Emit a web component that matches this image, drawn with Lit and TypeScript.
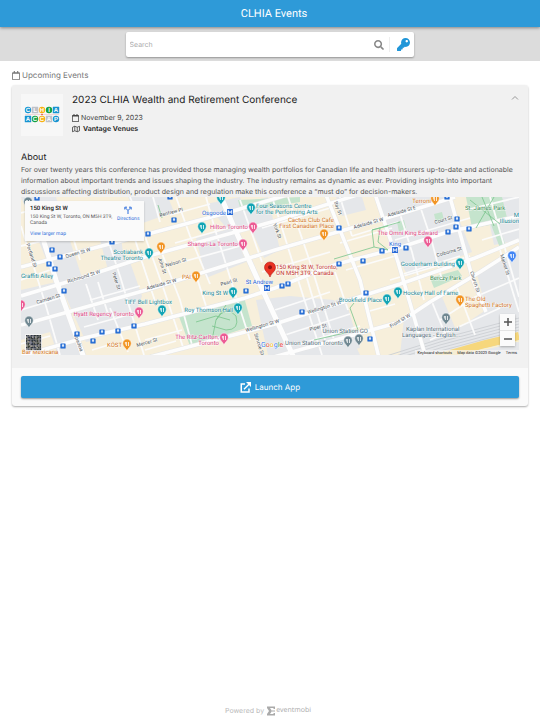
import { LitElement, html, svg, css } from "lit";
import { customElement, state } from "lit/decorators.js";

const ICONS = {
  search:
    "M505 442.700L405.300 343c-4.500-4.500-10.600-7-17-7H372c27.600-35.300 44-79.700 44-128C416 93.100 322.900 0 208 0S0 93.100 0 208s93.100 208 208 208c48.300 0 92.700-16.400 128-44v16.300c0 6.400 2.500 12.500 7 17l99.700 99.700c9.400 9.400 24.600 9.400 33.900 0l28.300-28.300c9.400-9.400 9.400-24.600.1-34zM208 336c-70.700 0-128-57.200-128-128 0-70.700 57.200-128 128-128 70.700 0 128 57.200 128 128 0 70.700-57.200 128-128 128z",
  key: "M512 176.001C512 273.203 433.202 352 336 352c-11.220 0-22.190-1.062-32.827-3.069l-24.012 27.014A23.999 23.999 0 0 1 261.223 384H224v40c0 13.255-10.745 24-24 24h-40v40c0 13.255-10.745 24-24 24H24c-13.255 0-24-10.745-24-24v-78.059c0-6.365 2.529-12.470 7.029-16.971l161.802-161.802C163.108 213.814 160 195.271 160 176 160 78.798 238.797.001 335.999 0 433.488-.001 512 78.511 512 176.001zM336 128c0 26.510 21.490 48 48 48s48-21.490 48-48-21.490-48-48-48-48 21.490-48 48z",
  calendar:
    "M400 64h-48V12c0-6.600-5.400-12-12-12h-40c-6.600 0-12 5.400-12 12v52H160V12c0-6.600-5.400-12-12-12h-40c-6.600 0-12 5.400-12 12v52H48C21.500 64 0 85.500 0 112v352c0 26.500 21.500 48 48 48h352c26.500 0 48-21.500 48-48V112c0-26.500-21.500-48-48-48zm-6 400H54c-3.300 0-6-2.700-6-6V160h352v298c0 3.300-2.700 6-6 6z",
};

const TEAL = "#12a4b4";
const PINK = "#ec5b94";
const ORANGE = "#f29423";
const SLATE = "#6f8791";
const BLUE = "#4285f4";

/* Road network, drawn widest first */
const AVENUES = [
  "M21 180L44 242L56 280L84 358",
  "M214 180L233 225L258 280L294 358",
  "M320 180L360 280L379 358",
  "M21 296L87 276L145 257L275 221L360 194",
  "M21 267L148 234L230 212L290 194",
  "M21 356L84 338L145 324L245 298L275 288L337 264L395 249L448 232L519 216",
  "M150 357L188 347L275 324L340 303L400 284L475 258L519 240",
  "M270 358L310 347L400 322L430 302L480 272L519 247",
  "M21 325L68 312L150 289L275 250L400 214L455 197",
  "M375 194L398 262L426 358",
  "M448 190L473 280L486 312",
];

const STREETS = [
  "M21 226L46 306L60 355", "M66 240L84 240L130 228", "M108 240L120 276L144 355", "M134 236L142 262L156 304",
  "M130 197L140 222L164 290L184 350", "M153 197L160 222", "M176 197L190 236L210 284", "M158 243L180 300L192 345",
  "M206 197L214 226L234 290L250 340", "M165 230L240 210", "M175 243L228 228", "M182 262L240 246", "M170 215L210 204",
  "M272 197L282 228L300 286L322 355", "M240 200L262 262", "M288 197L310 262L334 340", "M262 228L330 208",
  "M262 272L330 252", "M340 197L352 236", "M346 270L395 256", "M352 236L398 222", "M340 243L392 228",
  "M395 240L470 218", "M390 280L470 256", "M400 214L412 252L424 300", "M420 206L432 242L442 280", "M400 275L460 256",
  "M490 197L519 297", "M466 210L519 197", "M482 240L519 229", "M500 250L519 312", "M440 320L475 297L519 278",
  "M430 340L500 308", "M432 302L446 336", "M456 285L475 335", "M92 350L112 344", "M21 344L50 336", "M90 300L140 286",
  "M86 284L98 320", "M98 282L108 314", "M21 280L50 270", "M21 310L60 298", "M84 327L135 313", "M110 308L128 352",
  "M145 340L182 330", "M145 350L176 341", "M196 275L206 306", "M285 335L350 314", "M300 344L360 326", "M275 310L330 292",
  "M335 272L348 310", "M306 275L325 340", "M366 312L395 304", "M21 213L40 208", "M21 246L46 240", "M67 218L80 260",
];

/* District fills laid under the roads */
const GREY_BLOCKS = [
  "21,290 56,282 84,355 21,355", "60,284 130,262 142,296 128,334 86,342", "128,197 168,197 174,212 140,224",
  "196,238 232,228 246,262 206,278", "206,204 240,197 250,226 230,232", "240,204 268,197 280,250 264,258",
  "256,300 290,296 334,300 360,355 268,355", "336,300 345,298 360,348 326,355", "376,197 450,197 472,252 408,276 394,250",
  "404,318 519,250 519,355 400,355", "484,197 519,197 519,240 494,245", "21,197 56,197 84,284 56,284", "100,240 134,235 140,260 108,270",
  "336,197 362,197 366,210 342,216",
];
const CREAM_BLOCKS = [
  "21,340 50,332 58,355 21,355", "21,268 50,262 54,276 21,288", "92,338 140,324 148,350 96,355", "440,292 476,270 486,310 456,330",
  "400,280 455,262 470,276 404,316", "120,230 134,228 140,256 124,260",
];
const PARKS = [
  "178,314 244,297 252,326 190,346", "238,200 300,197 300,202 241,211", "466,197 502,197 508,222 472,228",
  "490,222 496,220 506,246 500,248", "430,278 458,270 462,276 434,288", "397,222 404,220 406,228 399,232", "434,214 442,212 444,220 436,222",
];
const PATHS = [
  "M196 322L216 316L230 320M212 340L216 320L226 305M216 320Q226 304 236 316Q240 330 226 330L212 326",
  "M470 200L500 224M494 197L476 228M482 197L494 226", "M334 259L374 247L372 230L388 226M380 228L378 242L388 250L374 247",
  "M314 340L358 330L350 308L354 303", "M158 205L162 218", "M372 230L400 222",
];

const STOPS = [
  [37, 198], [52, 250], [60, 257], [49, 264], [55, 269], [112, 242], [148, 234], [174, 220], [170, 197], [64, 291], [77, 334],
  [102, 332], [118, 331], [134, 326], [93, 341], [63, 346], [246, 291], [282, 286], [288, 284], [302, 312], [366, 293],
  [370, 339], [339, 228], [339, 264], [363, 261], [382, 251], [457, 219], [456, 227], [448, 232], [469, 229], [406, 248], [447, 197],
];
const SUBWAYS = [[230, 212], [267, 288], [395, 250]];

const PINS: [number, number, string][] = [
  [28, 202, SLATE], [221, 198, TEAL], [149, 253, TEAL], [161, 247, ORANGE], [202, 227, TEAL], [251, 208, TEAL], [253, 227, PINK],
  [243, 244, PINK], [196, 276, ORANGE], [324, 234, ORANGE], [435, 199, ORANGE], [428, 241, PINK], [460, 263, TEAL],
  [512, 256, BLUE], [233, 292, TEAL], [238, 308, TEAL], [162, 310, TEAL], [224, 338, PINK], [139, 312, PINK], [21, 305, PINK],
  [29, 321, SLATE], [127, 344, ORANGE], [387, 299, TEAL], [398, 292, TEAL], [348, 341, SLATE], [359, 339, SLATE],
  [446, 318, SLATE], [460, 300, ORANGE],
];

type Label = [string, number, number, string, string];
const LABELS: Label[] = [
  ["Four Seasons Centre", 256, 208, "start", "teal"], ["for the Performing Arts", 256, 214, "start", "teal"],
  ["Osgoode", 226, 215, "end", "blue"], ["Hilton Toronto", 248, 229, "end", "pink"],
  ["Shangri-La Toronto", 238, 246, "end", "pink"], ["Scotiabank", 143, 254, "end", "teal"],
  ["Theatre Toronto", 143, 260, "end", "teal"], ["PAI", 191, 279, "end", "orange"],
  ["Cactus Club Cafe", 334, 222, "end", "orange"], ["First Canadian Place", 334, 228, "end", "orange"],
  ["Terroni", 431, 203, "end", "orange"], ["The Omni King Edward", 438, 235, "end", "pink"],
  ["King", 401, 246, "end", "blue"], ["Gooderham Building", 455, 266, "end", "teal"],
  ["St. James Park", 465, 210, "start", "green"], ["Berczy Park", 430, 280, "start", "green"],
  ["M", 519, 217, "end", "teal"], ["Illusion", 519, 223, "end", "teal"],
  ["150 King St W, Toronto,", 276, 269, "start", "red"], ["ON M5H 3T9, Canada", 276, 275, "start", "red"],
  ["St Andrew", 273, 284, "end", "blue"], ["King St W", 228, 295, "end", "teal"],
  ["Roy Thomson Hall", 233, 312, "end", "teal"], ["TIFF Bell Lightbox", 172, 304, "end", "teal"],
  ["Hyatt Regency Toronto", 134, 316, "end", "pink"], ["The Ritz-Carlton,", 219, 339, "end", "pink"],
  ["Toronto", 219, 345, "end", "pink"], ["KÖST", 122, 347, "end", "orange"],
  ["Graffiti Alley", 21, 278, "start", "teal"], ["Bar Mexicana", 22, 354, "start", "orange"],
  ["Brookfield Place", 382, 302, "end", "teal"], ["Hockey Hall of Fame", 403, 295, "start", "teal"],
  ["The Old", 465, 301, "start", "orange"], ["Spaghetti Factory", 465, 307, "start", "orange"],
  ["Union Station GO", 368, 333, "end", "slate"], ["Union Station Toronto", 343, 345, "end", "slate"],
  ["Kaplan International", 406, 331, "start", "slate"], ["Languages - English...", 402, 337, "start", "slate"],
];

const ROAD_NAMES: [string, number, number, number][] = [
  ["Queen St W", 66, 258, -16], ["Richmond St W", 68, 283, -17], ["Camden St", 37, 304, -17], ["Renfrew Pl", 160, 217, -15],
  ["Nelson St", 166, 267, -16], ["Adelaide St W", 147, 290, -16], ["Adelaide St W", 354, 229, -16], ["Adelaide St E", 388, 217, -16],
  ["Pearl St", 221, 286, -16], ["Wellington St W", 246, 332, -16], ["Wellington St W", 308, 314, -17], ["Piper St", 310, 331, -15],
  ["Mercer St", 137, 347, -16], ["Front St W", 391, 328, -31], ["Court St", 435, 224, -16], ["Colborne St", 437, 257, -16],
  ["John St", 158, 258, 72], ["Peter St", 112, 273, 72], ["York St", 273, 224, 70], ["Bay St", 334, 202, 70],
  ["Church St", 470, 272, 72], ["Market St", 500, 255, 72], ["Simcoe St", 254, 334, 72], ["Spadina", 74, 335, 70],
  ["Portland St", 26, 244, 72],
];

const LOGO: [string, string, boolean][][] = [
  [["C", "#1793d0", true], ["L", "#bfc2c9", false], ["H", "#f7b113", true], ["I", "#13a144", true], ["A", "#1793d0", false]],
  [["A", "#1793d0", false], ["C", "#13a144", true], ["C", "#f7b113", true], ["A", "#bfc2c9", false], ["P", "#1793d0", true]],
];

const THUMB_TONES = ["#2c333c", "#4a4f55", "#7a7674", "#353b4c", "#9b978e", "#3d4238", "#5c5f70"];

const glyph = (name: keyof typeof ICONS, cls: string, box = "0 0 512 512") =>
  html`<svg class=${cls} viewBox=${box} aria-hidden="true"><path fill="currentColor" d=${ICONS[name]} /></svg>`;

@customElement("venue-map")
export class VenueMap extends LitElement {
  static styles = css`
    :host { display: block; position: relative; height: 158px; overflow: hidden; font-family: Roboto, "Liberation Sans", sans-serif; }
    .canvas { display: block; width: 100%; height: 100%; }
    .canvas text { font-size: 6px; paint-order: stroke; stroke: #ffffffb0; stroke-width: 1px; }
    .canvas .road { font-size: 5px; fill: #4f565c; }
    .canvas .wordmark { font-size: 7px; }
    .teal { fill: #168693; } .pink { fill: #dc3f82; } .orange { fill: #d2741a; } .blue { fill: #2664d8; }
    .green { fill: #3b8b55; } .red { fill: #c3322c; } .slate { fill: #57707c; }
    .place { position: absolute; top: 4px; left: 4px; display: flex; gap: 3px;
      padding: 4px 5px 4px 5px; background: #fafafa; box-shadow: 0 1px 2px #0003; font-size: 5px; line-height: 6px; color: #555; }
    .place h3 { margin: 0 0 2px; font-size: 6px; line-height: 7px; font-weight: 500; color: #111; }
    .place p { margin: 0 0 5px; width: 84px; }
    a { color: #2b6cdb; text-decoration: none; }
    .directions { display: flex; flex-direction: column; align-items: center; align-self: flex-start; padding: 1px 0; gap: 2px; }
    .directions svg { width: 8px; height: 8px; }
    .zoom { position: absolute; right: 4px; bottom: 9px; width: 15px; display: flex; flex-direction: column; background: #fbfbfb;
      box-shadow: 0 1px 2px #0004; }
    .zoom button { height: 16px; padding: 0; border: 0; background: none; color: #555; display: grid; place-items: center; }
    .zoom button + button { border-top: 1px solid #e4e4e4; }
    .zoom svg { width: 8px; height: 8px; }
    .credits { position: absolute; right: 0; bottom: 0; display: flex; gap: 5px; padding: 0 2px; background: #f5f5f5b8; font-size: 4px; line-height: 5px; color: #222; }
    .credits button { padding: 0; border: 0; background: none; font: inherit; color: inherit; }
    .credits a { color: inherit; }
  `;

  private pin([x, y, color]: [number, number, string]) {
    return svg`<g transform=${`translate(${x} ${y})`}>
      <path d="M0 7C-1 4-4.300 2.500-4.300-.6A4.300 4.300 0 0 1 4.300-.6C4.300 2.500 1 4 0 7z" fill=${color} stroke="#fff" stroke-width=".5"/>
      <path d="M-1.600-2v1.500q0 1 1 1V2M-.6-2v2.500M1.500-2v4" fill="none" stroke="#fff" stroke-width=".8"/></g>`;
  }

  render() {
    return html`
      <svg class="canvas" viewBox="21 197 498 158" preserveAspectRatio="xMidYMid slice" role="img" aria-label="Map of 150 King St W, Toronto">
        <rect x="-400" y="0" width="1400" height="600" fill="#f7efdb" />
        ${GREY_BLOCKS.map((p) => svg`<polygon points=${p} fill="#e5e7ea"/>`)}
        ${CREAM_BLOCKS.map((p) => svg`<polygon points=${p} fill="#f7efdb"/>`)}
        ${PARKS.map((p) => svg`<polygon points=${p} fill="#c5e4cd"/>`)}
        ${[0, 3, 6, 9, 12].map((o) => svg`<path d=${`M380 ${358 + o}L440 ${339 + o}L519 ${318 + o}`} fill="none" stroke="#cfd2d6" stroke-width="1"/>`)}
        <path d="M436 358L485 344L519 336" fill="none" stroke="#f6d77c" stroke-width="8" />
        <path d="M448 358L519 341" fill="none" stroke="#fff3c4" stroke-width="1" />
        ${STREETS.map((d) => svg`<path d=${d} fill="none" stroke="#fbfbfb" stroke-width="1.800"/>`)}
        ${AVENUES.map((d, i) => svg`<path d=${d} fill="none" stroke="#e4e5e6" stroke-width=${i < 2 ? 6 : 4.5}/>`)}
        ${AVENUES.map((d, i) => svg`<path d=${d} fill="none" stroke="#fdfdfd" stroke-width=${i < 2 ? 5 : 3.6}/>`)}
        ${PATHS.map((d) => svg`<path d=${d} fill="none" stroke="#79c48c" stroke-width=".8"/>`)}
        ${ROAD_NAMES.map(([t, x, y, r]) => svg`<text class="road" transform=${`translate(${x} ${y}) rotate(${r})`}>${t}</text>`)}
        ${STOPS.map(([x, y]) => svg`<g transform=${`translate(${x} ${y})`}><rect x="-2.600" y="-2.600" width="5.200" height="5.200" rx=".6" fill="#1b66d2"/>
          <path d="M-1-1.500h2v2h-2zM-.8.5v1M.8.5v1" fill="#dce8fa" stroke="#dce8fa" stroke-width=".3"/></g>`)}
        ${SUBWAYS.map(([x, y]) => svg`<g transform=${`translate(${x} ${y})`}><rect x="-3" y="-3" width="6" height="6" rx=".6" fill="#2a6bd8"/>
          <path d="M-1.700 1.800V-1.500L0 .8L1.700-1.500V1.800" fill="none" stroke="#fff" stroke-width=".9"/></g>`)}
        ${PINS.map((p) => this.pin(p))}
        <path d="M270 277C269 273 264.500 271.500 264.500 267.500A5.500 5.500 0 0 1 275.500 267.500C275.500 271.500 271 273 270 277z" fill="#ea3323" stroke="#b31412" stroke-width=".6" />
        <circle cx="270" cy="267.300" r="2" fill="#8f1210" />
        ${LABELS.map(([t, x, y, a, c]) => svg`<text class=${c} x=${x} y=${y} text-anchor=${a}>${t}</text>`)}
        <text class="wordmark" x="261" y="347"><tspan fill="#4285f4">G</tspan><tspan fill="#ea4335">o</tspan><tspan fill="#fbbc05">o</tspan><tspan fill="#4285f4">g</tspan><tspan fill="#34a853">l</tspan><tspan fill="#ea4335">e</tspan></text>
        <rect x="25" y="334" width="17" height="17" rx="1" fill="#f4f4f4" />
        ${Array.from({ length: 100 }, (_, i) => svg`<rect x=${26 + (i % 10) * 1.5} y=${335 + Math.floor(i / 10) * 1.5} width="1.600" height="1.600" fill=${THUMB_TONES[((i * 7919 + 31) ^ (i * i * 13)) % 7]}/>`)}
      </svg>
      <section class="place">
        <div>
          <h3>150 King St W</h3>
          <p>150 King St W, Toronto, ON M5H 3T9, Canada</p>
          <a href="#map">View larger map</a>
        </div>
        <a class="directions" href="#directions">
          <svg viewBox="0 0 8 8" aria-hidden="true"><path d="M4 8V4.500L1.500 2M4 4.500L6.500 2M.8 3.500V1.200H3M5 1.200H7.200V3.500" fill="none" stroke="#2b6cdb" stroke-width="1" /></svg>
          Directions
        </a>
      </section>
      <div class="zoom">
        <button aria-label="Zoom in"><svg viewBox="0 0 8 8"><path d="M0 4h8M4 0v8" stroke="currentColor" stroke-width="1.500" /></svg></button>
        <button aria-label="Zoom out"><svg viewBox="0 0 8 8"><path d="M0 4h8" stroke="currentColor" stroke-width="1.500" /></svg></button>
      </div>
      <div class="credits"><button>Keyboard shortcuts</button><span>Map data ©2023 Google</span><a href="#terms">Terms</a></div>
    `;
  }
}

@customElement("app-root")
export class AppRoot extends LitElement {
  static styles = css`
    :host { display: flex; flex-direction: column; min-height: 100vh; background: #fff; color: #222;
      font-family: Inter, "Liberation Sans", sans-serif; font-size: 7px; line-height: 11px; text-rendering: geometricPrecision; }
    * { box-sizing: border-box; }
    h1, h2, h3, p { margin: 0; font-weight: 400; }
    button { font: inherit; border: 0; padding: 0; background: none; cursor: pointer; text-rendering: inherit; }
    .bar { display: grid; place-items: center; height: 27px; padding-left: 8px; background: #2e9ad8; color: #fff; box-shadow: 0 1px 3px #0006; position: relative; }
    .bar h1 { font-family: Roboto, sans-serif; font-size: 11px; line-height: 14px; }
    .finder { display: flex; justify-content: center; padding: 5px 12px 4px; background: #dcdcdc; }
    .field { display: flex; align-items: center; width: 56%; height: 25px; background: #fff; border-radius: 2px; box-shadow: 0 1px 2px #0005; }
    .field input { flex: 1; min-width: 0; height: 100%; padding: 0 4px; border: 0; outline: 0; background: none; font: inherit; text-rendering: inherit; }
    .field input::placeholder { color: #aaa; opacity: 1; }
    .field button { display: grid; place-items: center; height: 15px; }
    .go { width: 20px; color: #888; }
    .code { width: 25px; padding-left: 3px; border-left: 1px solid #eee; color: #2196d8; }
    .i9 { width: 10px; height: 10px; }
    .i13 { width: 13px; height: 13px; }
    .cal { width: 7px; height: 8px; flex: none; }
    main { flex: 1; padding: 8px 12px; }
    .heading { display: flex; align-items: center; gap: 2px; height: 12px; margin-bottom: 4px; font-size: 8px; color: #777; }
    .heading .cal { width: 8px; height: 9px; }
    .card { border-radius: 3px; overflow: hidden; background: #fafafa; box-shadow: 0 1px 2px #0005; }
    .detail { padding: 9px 9px 13px; background: #f1f1f1; }
    .summary { display: flex; gap: 9px; height: 58px; }
    .logo { width: 42px; height: 42px; flex: none; background: #f7f7f7; }
    .logo text { font: bold 6px "Liberation Sans", sans-serif; fill: #fff; text-anchor: middle; }
    .facts { flex: 1; }
    .facts h2 { font-size: 10px; line-height: 12px; margin-bottom: 6px; }
    .row { display: flex; align-items: center; gap: 2px; color: #444; }
    .row.venue { gap: 3px; color: #222; font-weight: 600; }
    .fold { width: 8px; height: 8px; color: #999; }
    .fold svg { display: block; width: 8px; height: 8px; }
    .about h3 { font-size: 9px; line-height: 12px; }
    .about p { line-height: 11px; color: #555; }
    .action { padding: 8px 9px; }
    .launch { display: flex; align-items: center; justify-content: center; gap: 4px; width: 100%; height: 22px; border-radius: 2px;
      background: #2e9ad8; color: #fff; box-shadow: 0 1px 2px #0006; font-size: 8px; }
    .launch svg { width: 11px; height: 11px; }
    footer { display: flex; align-items: center; justify-content: center; gap: 3px; padding: 4px 4px 4px 0; color: #bbb; }
    .brand { display: flex; align-items: center; gap: 1px; font-family: "Open Sans", sans-serif; color: #aaa; text-decoration: none; }
    .brand svg { width: 8px; height: 10px; }
  `;

  @state() private open = true;

  render() {
    return html`
      <header class="bar"><h1>CLHIA Events</h1></header>
      <div class="finder">
        <form class="field" @submit=${(e: Event) => e.preventDefault()}>
          <input type="text" placeholder="Search" aria-label="Search" />
          <button class="go" aria-label="Search">${glyph("search", "i9")}</button>
          <button class="code" type="button" aria-label="Enter event code">${glyph("key", "i13")}</button>
        </form>
      </div>
      <main>
        <p class="heading">${glyph("calendar", "cal", "0 0 448 512")}<span>Upcoming Events</span></p>
        <article class="card">
          <div class="detail">
            <div class="summary">
              <svg class="logo" viewBox="0 0 42 42" role="img" aria-label="CLHIA ACCAP">
                ${LOGO.map((row, r) => row.map(([ch, color, round], c) => {
                  const x = 7 + c * 7;
                  const y = 16 + r * 9;
                  return svg`<rect x=${x - 3.2} y=${y - 3.2} width="6.400" height="6.400" rx=${round ? 3.2 : 0.3} fill=${color}/><text x=${x} y=${y + 2.2}>${ch}</text>`;
                }))}
                <path d="M4 20.500h34" stroke="#e9b9bb" stroke-width=".5" /><circle cx="21" cy="20.500" r=".8" fill="#e0453a" />
              </svg>
              <div class="facts">
                <h2>2023 CLHIA Wealth and Retirement Conference</h2>
                <div class="row">${glyph("calendar", "cal", "0 0 448 512")}<span>November 9, 2023</span></div>
                <div class="row venue">
                  <svg width="8" height="8" viewBox="0 0 16 14" aria-hidden="true"><path d="M1 3.500L5.500 1.500L10.500 3.500L15 1.500V10.500L10.500 12.500L5.500 10.500L1 12.500zM5.500 1.500V10.500M10.500 3.500V12.500" fill="none" stroke="#333" stroke-width="1.500" /></svg>
                  <span>Vantage Venues</span>
                </div>
              </div>
              <button class="fold" aria-label="Toggle details" aria-expanded=${this.open} @click=${() => (this.open = !this.open)}>
                <svg viewBox="0 0 8 8"><path d="M1 5.500L4 2.500L7 5.500" fill="none" stroke="currentColor" /></svg>
              </button>
            </div>
            ${this.open
              ? html`<section class="about">
                    <h3>About</h3>
                    <p>For over twenty years this conference has provided those managing wealth portfolios for Canadian life and health insurers up-to-date and actionable information about important trends and issues shaping the industry. The industry remains as dynamic as ever. Providing insights into important discussions affecting distribution, product design and regulation make this conference a “must do” for decision-makers.</p>
                  </section>
                  <venue-map></venue-map>`
              : null}
          </div>
          <div class="action">
            <button class="launch">
              <svg viewBox="0 0 22 22" aria-hidden="true"><path d="M10 4H2.500V20H18V13" fill="none" stroke="currentColor" stroke-width="3" /><path d="M8 14.500L18 4.500" stroke="currentColor" stroke-width="3" /><path d="M12 0H22V10z" fill="currentColor" /></svg>
              Launch App
            </button>
          </div>
        </article>
      </main>
      <footer>
        <span>Powered by</span>
        <a class="brand" href="#eventmobi">
          <svg viewBox="0 0 16 20" aria-hidden="true"><path d="M0 1H16V6H13V4H6L10 10L6 16H13V14H16V19H0V16L4 10L0 4z" fill="currentColor" /><path d="M11 8h2v4h-2zM14 9h2v2h-2z" fill="currentColor" /></svg>
          <span>eventmobi</span>
        </a>
      </footer>
    `;
  }
}
